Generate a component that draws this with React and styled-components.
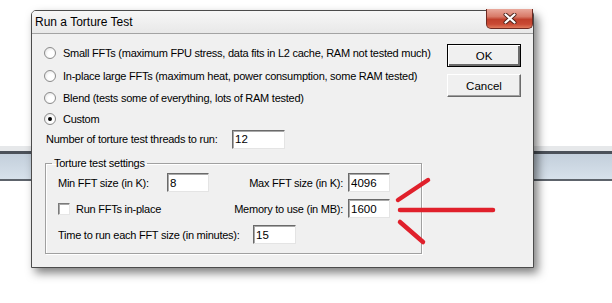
import React from 'react'
import styled, { createGlobalStyle } from 'styled-components'

const GlobalStyle = createGlobalStyle`
  html, body {
    margin: 0;
    padding: 0;
    background: #fff;
  }
  body {
    width: 612px;
    height: 303px;
    overflow: hidden;
    font-family: "Liberation Sans", Arial, sans-serif;
  }
`

const Screen = styled.div`
  position: relative;
  width: 612px;
  height: 303px;
  padding-top: 146px;
  box-sizing: border-box;
`

// the explorer-ish bar that runs behind the dialog
const BackStrip = styled.div`
  height: 35px;
  background: linear-gradient(
    to bottom,
    #e6e8ea 0 5px,
    #4b5159 5px 8px,
    #c3cfdb 8px,
    #d7e1eb 33px,
    #5d636b 33px 35px
  );
`

const Window = styled.div`
  position: absolute;
  left: 31px;
  top: 10px;
  width: 503px;
  height: 258px;
  box-sizing: border-box;
  border: 1px solid #4c4c4c;
  border-radius: 5px 5px 0 0;
  background: #f0f0f0;
  box-shadow: 4px 5px 10px rgba(0, 0, 0, 0.5);
  display: flex;
  flex-direction: column;
`

const TitleBar = styled.div`
  height: 22px;
  display: flex;
  align-items: center;
  padding-left: 3px;
  border-radius: 4px 4px 0 0;
  background: linear-gradient(to bottom, #f7f7f7, #e8e8e8);
  border-bottom: 1px solid #a3a3a3;
`

const Title = styled.span`
  font-size: 12px;
  color: #000;
`

const CloseButton = styled.div`
  margin-left: auto;
  align-self: flex-start;
  margin-top: -2px;
  width: 47px;
  height: 20px;
  box-sizing: border-box;
  border: 1px solid #6e2a22;
  border-top: none;
  border-radius: 0 0 5px 5px;
  background: linear-gradient(
    to bottom,
    #e9a99c 0%,
    #d87a68 40%,
    #c0402c 55%,
    #c94a34 80%,
    #e07a5c 100%
  );
  display: flex;
  align-items: center;
  justify-content: center;
`

const Client = styled.div`
  flex: 1;
  display: grid;
  grid-template-columns: 1fr 74px;
  column-gap: 16px;
  padding: 7px 12px 13px 12px;
  font-size: 11px;
  letter-spacing: -0.25px;
  color: #000;
`

const Main = styled.div`
  display: flex;
  flex-direction: column;
`

const RadioRow = styled.label`
  height: ${p => p.$h}px;
  display: flex;
  align-items: center;
  gap: 7px;
  white-space: nowrap;
`

const Radio = styled.span`
  width: 12px;
  height: 12px;
  flex-shrink: 0;
  box-sizing: border-box;
  border-radius: 50%;
  border: 1px solid #8b8b8b;
  background: radial-gradient(circle at 60% 60%, #fff 0 35%, #dcdcdc 100%);
  display: flex;
  align-items: center;
  justify-content: center;

  &::after {
    content: '';
    width: 4px;
    height: 4px;
    border-radius: 50%;
    background: ${p => (p.$checked ? '#000' : 'transparent')};
  }
`

const Row = styled.div`
  height: 20px;
  display: flex;
  align-items: center;
  padding-left: ${p => p.$indent || 0}px;
`

const Label = styled.span`
  width: ${p => (p.$w ? `${p.$w}px` : 'auto')};
  flex-shrink: 0;
  white-space: nowrap;
`

const Field = styled.input`
  width: ${p => p.$w}px;
  height: 19px;
  box-sizing: border-box;
  margin: 0;
  padding: 0 2px;
  border: 1px solid;
  border-color: #6a6a6a #e4e4e4 #e4e4e4 #6a6a6a;
  box-shadow: inset 1px 1px 0 #a9a9a9;
  background: #fff;
  font-family: inherit;
  font-size: 11.5px;
  letter-spacing: 0;
  color: #000;
  outline: none;
`

const Group = styled.fieldset`
  margin: 7px 0 0 1px;
  width: 377px;
  box-sizing: border-box;
  padding: 0 31px 9px 12px;
  border: 1px solid #a0a0a0;
  box-shadow: 1px 1px 0 #fff, inset 1px 1px 0 #fff;
  min-inline-size: 0;
  display: flex;
  flex-direction: column;
  gap: 7px;
`

const Legend = styled.legend`
  margin-left: -6px;
  padding: 0 2px;
  line-height: 14px;
`

const SettingRow = styled.div`
  height: 19px;
  display: flex;
  align-items: center;
  justify-content: space-between;
  margin-top: ${p => p.$top || 0}px;
`

const Pair = styled.div`
  display: flex;
  align-items: center;
  gap: ${p => p.$gap ?? 5}px;
`

const Check = styled.span`
  width: 12px;
  height: 12px;
  box-sizing: border-box;
  border: 1px solid;
  border-color: #7a7a7a #e6e6e6 #e6e6e6 #7a7a7a;
  box-shadow: inset 1px 1px 0 #a8a8a8;
  background: #fff;
  margin-right: 6px;
`

const Buttons = styled.div`
  display: flex;
  flex-direction: column;
  gap: 7px;
  padding-top: 3px;
`

const Button = styled.div`
  height: 23px;
  box-sizing: border-box;
  display: flex;
  align-items: center;
  justify-content: center;
  background: #f0f0f0;
  border: 1px solid;
  border-color: ${p => (p.$default ? '#000' : '#fff #6b6b6b #6b6b6b #fff')};
  box-shadow: ${p =>
    p.$default
      ? 'inset 1px 1px 0 #fff, inset -2px -2px 0 #6b6b6b, inset -1px -1px 0 #a0a0a0'
      : 'inset -1px -1px 0 #a0a0a0'};
  font-size: 11.5px;
  letter-spacing: 0;
`

const Arrow = styled.svg`
  position: absolute;
  left: 0;
  top: 0;
  pointer-events: none;
`

function CloseGlyph() {
  return (
    <svg width="14" height="11" viewBox="0 0 14 11">
      <path
        d="M2.5 1.5 L11.5 9.5 M11.5 1.5 L2.5 9.5"
        stroke="#4a2018"
        strokeWidth="4"
        strokeLinecap="round"
      />
      <path
        d="M2.5 1.5 L11.5 9.5 M11.5 1.5 L2.5 9.5"
        stroke="#fff"
        strokeWidth="2.3"
        strokeLinecap="round"
      />
    </svg>
  )
}

const options = [
  { text: 'Small FFTs (maximum FPU stress, data fits in L2 cache, RAM not tested much)', h: 23 },
  { text: 'In-place large FFTs (maximum heat, power consumption, some RAM tested)', h: 23 },
  { text: 'Blend (tests some of everything, lots of RAM tested)', h: 21 },
  { text: 'Custom', h: 21, checked: true },
]

export default function App() {
  return (
    <Screen>
      <GlobalStyle />
      <BackStrip />
      <Window>
        <TitleBar>
          <Title>Run a Torture Test</Title>
          <CloseButton>
            <CloseGlyph />
          </CloseButton>
        </TitleBar>
        <Client>
          <Main>
            {options.map(o => (
              <RadioRow key={o.text} $h={o.h}>
                <Radio $checked={o.checked} />
                {o.text}
              </RadioRow>
            ))}
            <Row $indent={2}>
              <Label $w={186}>Number of torture test threads to run:</Label>
              <Field $w={53} defaultValue="12" readOnly />
            </Row>
            <Group>
              <Legend>Torture test settings</Legend>
              <SettingRow $top={3}>
                <Pair $gap={0}>
                  <Label $w={109}>Min FFT size (in K):</Label>
                  <Field $w={42} defaultValue="8" readOnly />
                </Pair>
                <Pair>
                  <Label>Max FFT size (in K):</Label>
                  <Field $w={42} defaultValue="4096" readOnly />
                </Pair>
              </SettingRow>
              <SettingRow>
                <Pair $gap={0}>
                  <Check />
                  <Label>Run FFTs in-place</Label>
                </Pair>
                <Pair>
                  <Label>Memory to use (in MB):</Label>
                  <Field $w={42} defaultValue="1600" readOnly />
                </Pair>
              </SettingRow>
              <SettingRow>
                <Pair $gap={0}>
                  <Label $w={195}>Time to run each FFT size (in minutes):</Label>
                  <Field $w={43} defaultValue="15" readOnly />
                </Pair>
              </SettingRow>
            </Group>
          </Main>
          <Buttons>
            <Button $default>OK</Button>
            <Button>Cancel</Button>
          </Buttons>
        </Client>
      </Window>
      <Arrow width="612" height="303" viewBox="0 0 612 303">
        <g stroke="#e0202b" strokeWidth="4.5" strokeLinecap="round" fill="none">
          <path d="M398 200 L428 180" />
          <path d="M400 210 L493 210" />
          <path d="M400 222 L423 242" />
        </g>
      </Arrow>
    </Screen>
  )
}
